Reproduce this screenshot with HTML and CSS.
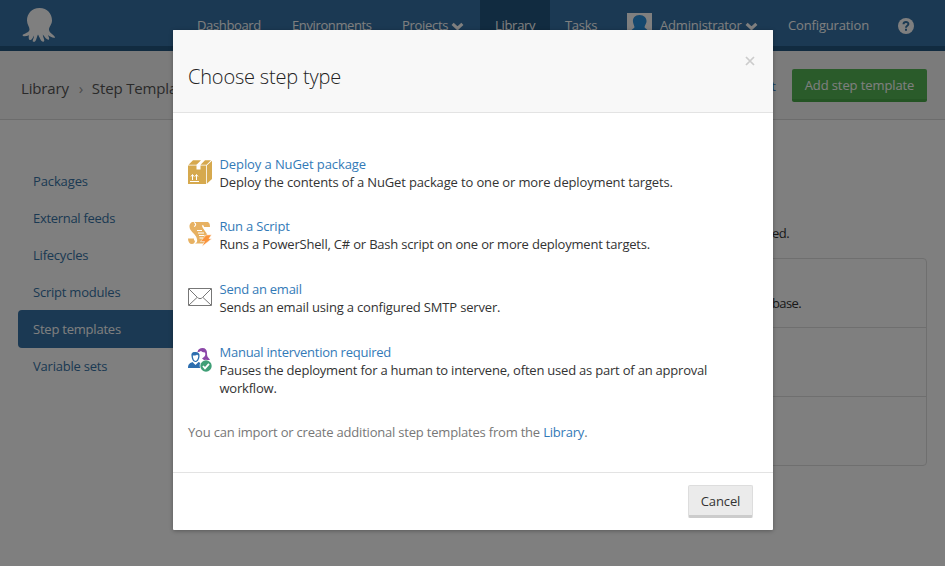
FILE: index.html
```html
<!DOCTYPE html>
<html lang="en">
<head>
<meta charset="utf-8">
<title>Step Templates</title>
<link rel="stylesheet" href="styles.css">
</head>
<body>
<div class="page">
  <nav class="navbar">
    <svg class="logo" viewBox="0 0 34 36"><path fill="#fff" d="M17.500 1C9.500 1 5 7 5 13.500c0 4 2.500 6 2.500 9C7.500 25.500 2 26.500.500 28c0 1.700 3.500 1.500 6.500.2-.5 1.800-.5 3.300.5 4.800 2 .8 3.500-2.500 4.500-4.500.2 3-2.500 5.500-.6 6.300 3 .7 3.100-4.800 4.600-7.300 1.500 2.500 3 7.800 5.500 7.300 2.200-.8-.7-4.500-.7-7.300 1.500 1.500 3.500 5.500 6 5.200 1.200-1-.3-3-1-4.700 2 1.200 5 3.500 7.200 2.700.8-2-6-4.200-6-8.200 0-3 3-5 3-9C30 7 25.500 1 17.500 1z"/></svg>
    <a class="nav-item dashboard"><span>Dashboard</span></a>
    <a class="nav-item environments"><span>Environments</span></a>
    <a class="nav-item projects"><span>Projects</span><svg class="chevron" viewBox="0 0 12 8"><path d="M1.500 1.500 6 5.800l4.500-4.300"/></svg></a>
    <a class="nav-item library active"><span>Library</span></a>
    <a class="nav-item tasks"><span>Tasks</span></a>
    <a class="nav-item admin"><svg class="avatar" viewBox="0 0 25 25"><path fill="#fff" d="M0 0h25v25H0z"/><path fill="#2a90dc" d="M12.500 2C8 2 5.500 5 6 9c.3 2 1 3 1.500 5-.2 2-4.500 2-4.500 8h19c0-6-4-6-4.500-8 .5-2 1.500-3 2-5C20 5 17 2 12.500 2z"/></svg><span>Administrator</span><svg class="chevron" viewBox="0 0 12 8"><path d="M1.500 1.500 6 5.800l4.500-4.300"/></svg></a>
    <a class="nav-item config"><span>Configuration</span></a>
    <svg class="help" viewBox="0 0 16 16"><circle cx="8" cy="8" r="8" fill="#fff"/><path d="M5.500 6.200C5.600 3.300 10.400 3.300 10.400 6 10.400 7.800 8 7.700 8 9.700M8 10.700v2" fill="none" stroke="#3673a6" stroke-width="2"/></svg>
  </nav>
  <header class="subheader">
    <div class="breadcrumb"><span>Library</span><span class="sep">›</span><span class="current">Step Templates</span></div>
    <a class="import">Import</a>
    <button class="add">Add step template</button>
  </header>
  <main class="content">
    <ul class="sidebar">
      <li class="packages"><span>Packages</span></li>
      <li class="feeds"><span>External feeds</span></li>
      <li class="lifecycles"><span>Lifecycles</span></li>
      <li class="modules"><span>Script modules</span></li>
      <li class="active"><span>Step templates</span></li>
      <li class="sets"><span>Variable sets</span></li>
    </ul>
    <section class="templates">
      <p class="intro">ed.</p>
      <div class="list">
        <div class="entry">base.</div>
        <div class="entry"></div>
        <div class="entry"></div>
      </div>
    </section>
  </main>
</div>
<div class="overlay">
  <div class="modal">
    <div class="modal-head">
      <h1>Choose step type</h1>
      <svg class="close" viewBox="0 0 10 10"><path d="m1 1 8 8M9 1 1 9"/></svg>
    </div>
    <div class="modal-body">
      <div class="step">
        <svg class="icon" viewBox="0 0 24 24"><path fill="#d6a94e" d="M0 5.500h18V24H0zM.500 4.700 5 .3h8L8.500 4.700zM12.500 4.700 17 .3h6l-4.500 4.400zM18.800 5.500 24 .8V19l-5.200 4.800z"/><path fill="#fff" d="M8.500 4.700h4V9.500h-4z"/><path fill="none" stroke="#fff" d="M2 21.500h9M4.500 20v-5M8.500 20v-5M3 16.500l1.500-2 1.500 2M7 16.500l1.500-2 1.500 2"/></svg>
        <div class="step-text"><a class="t1">Deploy a NuGet package</a><p class="d1">Deploy the contents of a NuGet package to one or more deployment targets.</p></div>
      </div>
      <div class="step">
        <svg class="icon" viewBox="0 0 24 24"><path fill="#e7b162" d="M4 0h15c2.500 0 3 2.500 3 5h-6c0-1.500-1-2-2.200-1.500.7 3 4 6 5.700 9.500L17 21.500H7c3-1 2.500-4 1-7C6 11 2 9 1.500 5 1.300 3 2 1 4 0zM0 16.500h6c-.3 1.500.3 2 1 2.500-.3 1.800-1.200 3-3 3-2.500 0-4-2-4-5.500z"/><path fill="none" stroke="#fff" stroke-width="1.100" d="M6 .5c3 1 1.500 3.500 0 4M9 8.500h5M10 11h6M11 13.500h5.500M11.500 16H15"/><path fill="#fa943c" stroke="#fff" stroke-width=".5" d="m18 13 5.500-.3-2.500 4h2.800L14 24.500l2.500-5H12.500z"/></svg>
        <div class="step-text"><a class="t2">Run a Script</a><p class="d2">Runs a PowerShell, C# or Bash script on one or more deployment targets.</p></div>
      </div>
      <div class="step">
        <svg class="icon" viewBox="0 0 24 24"><path fill="none" stroke="#777" d="M.5 3.500h23v17H.5zM1 4l8.500 8.500c1.500 1.500 3.500 1.500 5 0L23 4M1 20l8-7.500M23 20l-8-7.500"/></svg>
        <div class="step-text"><a class="t3">Send an email</a><p class="d3">Sends an email using a configured SMTP server.</p></div>
      </div>
      <div class="step">
        <svg class="icon" viewBox="0 0 24 24"><path fill="#8c48a8" d="M9.500 4C10 1 12 0 14.500 0c3 0 4.500 2 4.500 5 0 2.500.3 4 2 5.500l1 1.500h-6l-2-1.500 2-1.500c1.500-1 1.500-3 1-4.500-2.500 0-3-1-4-1.500-1 0-1.500 1.500-3.500 1z"/><path fill="#2d6eaf" d="M3.500 8C3 4.500 5 4 7.500 4c3 0 4.500 1.500 4 4.500-.3 3-1.800 5.500-4 5.500S3.700 11 3.500 8z"/><path fill="#fff" d="M4.800 7.500c2.500.3 4-.7 4.500-.7l1 1C10 11 9 13 7.500 13S5 10.500 4.800 7.500z"/><path fill="#2d6eaf" d="M0 20c0-4 2-5 4.500-6l3 3 3-3c2 .8 3.500 2 3.500 6z"/><circle cx="18" cy="18" r="6.300" fill="#fff"/><circle cx="18" cy="18" r="5.700" fill="#3f9f76"/><path d="m15 18 2 2.300 4-4.500" fill="none" stroke="#fff" stroke-width="1.800"/></svg>
        <div class="step-text"><a class="t4">Manual intervention required</a><p class="d4">Pauses the deployment for a human to intervene, often used as part of an approval<br>workflow.</p></div>
      </div>
      <p class="note">You can import or create additional step templates from the <a>Library</a>.</p>
    </div>
    <div class="modal-foot"><button class="cancel">Cancel</button></div>
  </div>
</div>
</body>
</html>
```
FILE: styles.css
```css
* { box-sizing: border-box; }
html, body { margin: 0; height: 100%; overflow: hidden; }
body { font: 13px/18px "Open Sans", "Noto Sans", sans-serif; color: #333; background: #fff; }
p, h1, ul { margin: 0; padding: 0; }
button { font: inherit; margin: 0; padding: 0; }
span, a { white-space: nowrap; }
.page { height: 566px; }

.navbar { display: flex; height: 51px; background: #3673a6; border-bottom: 5px solid #225680; color: #fff; }
.logo { width: 34px; height: 36px; margin: 7px 125px 0 22px; flex: none; }
.nav-item { display: flex; flex: none; padding-top: 16px; height: 46px; letter-spacing: -.3px; }
.dashboard { width: 95px; margin-left: 16px; letter-spacing: -.35px; }
.environments { width: 110px; letter-spacing: -.38px; }
.projects { width: 78px; }
.library { width: 70px; padding-left: 15px; }
.nav-item.active { background: #225680; }
.tasks { width: 77px; padding-left: 15px; }
.admin { width: 161px; letter-spacing: -.18px; }
.config { width: 110px; letter-spacing: -.15px; }
.avatar { width: 25px; height: 25px; margin: -3px 8px 0 0; }
.chevron { width: 13px; height: 9px; margin: 6px 0 0 3px; fill: none; stroke: #fff; stroke-width: 2.800; }
.help { width: 16px; height: 16px; margin-top: 18px; }

.subheader { display: flex; height: 69px; background: #f7f7f7; border-bottom: 1px solid #d8d8d8; }
.breadcrumb { display: flex; width: 714px; padding: 26px 0 0 21px; font-size: 15px; line-height: 22px; letter-spacing: -.15px; color: #555; }
.sep { width: 23px; padding-left: 10px; color: #999; }
.current { width: 86px; overflow: hidden; }
.import { width: 62px; padding-top: 26px; text-align: right; color: #337ab7; }
.add { width: 135px; height: 33px; margin: 18px 0 0 16px; padding-top: 1px; border: 0; border-bottom: 3px solid #48a848; border-radius: 2px; background: #55b755; color: #fff; letter-spacing: -.1px; }

.content { display: flex; padding: 42px 18px 0; }
.sidebar { width: 200px; list-style: none; color: #3673a6; letter-spacing: -.22px; }
.sidebar li { height: 38px; margin-bottom: -1px; padding: 10px 15px; }
.sidebar .packages { letter-spacing: -.12px; }
.sidebar .feeds { letter-spacing: -.3px; }
.sidebar .active { background: #3673a6; color: #fff; border-radius: 4px; }
.templates { flex: 1; padding: 62px 0 0 55px; }
.intro { padding-left: 499px; letter-spacing: -.5px; }
.list { height: 208px; margin-top: 16px; border: 1px solid #dedede; border-radius: 4px; }
.entry { height: 69px; padding: 35px 0 0 498px; border-bottom: 1px solid #dedede; letter-spacing: -.6px; }
.entry:last-child { border: 0; }

.overlay { position: absolute; inset: 0; padding-top: 30px; background: rgba(0,0,0,.5); }
.modal { width: 600px; height: 500px; margin-left: 173px; background: #fff; border-radius: 1px; box-shadow: 0 1px 4px rgba(0,0,0,.3); }
.modal-head { display: flex; justify-content: space-between; height: 83px; padding: 0 18px 0 15px; background: #f8f8f8; border-bottom: 1px solid #e3e3e3; border-radius: 1px 1px 0 0; }
h1 { padding-top: 34px; font-size: 20px; line-height: 26px; font-weight: 300; letter-spacing: -.19px; color: #222; }
.close { width: 10px; height: 10px; margin-top: 26px; fill: none; stroke: #ccc; stroke-width: 1.700; }
.modal-body { height: 359px; padding: 42px 15px 0; }
.step { display: flex; height: 63px; }
.step:first-child { height: 62px; }
.icon { width: 24px; height: 24px; margin: 5px 7.500px 0 0; flex: none; overflow: visible; }
.step a, .note a { color: #337ab7; }
.step a { display: block; width: max-content; }
.step p { white-space: nowrap; }
.t1 { letter-spacing: -.1px; }
.t2 { letter-spacing: -.2px; }
.t3 { letter-spacing: -.25px; }
.t4 { letter-spacing: -.25px; }
.d1 { letter-spacing: -.14px; }
.d2 { letter-spacing: -.2px; }
.d3 { letter-spacing: -.17px; }
.d4 { letter-spacing: -.21px; }
.note { margin-top: 17px; color: #777; letter-spacing: -.2px; }
.modal-foot { display: flex; justify-content: flex-end; height: 58px; padding: 12px 20px; border-top: 1px solid #e3e3e3; }
.cancel { width: 65px; height: 33px; border: 1px solid #ddd; border-bottom: 3px solid #ccc; border-radius: 2px; background: #ebebeb; color: #333; letter-spacing: -.1px; }
```
